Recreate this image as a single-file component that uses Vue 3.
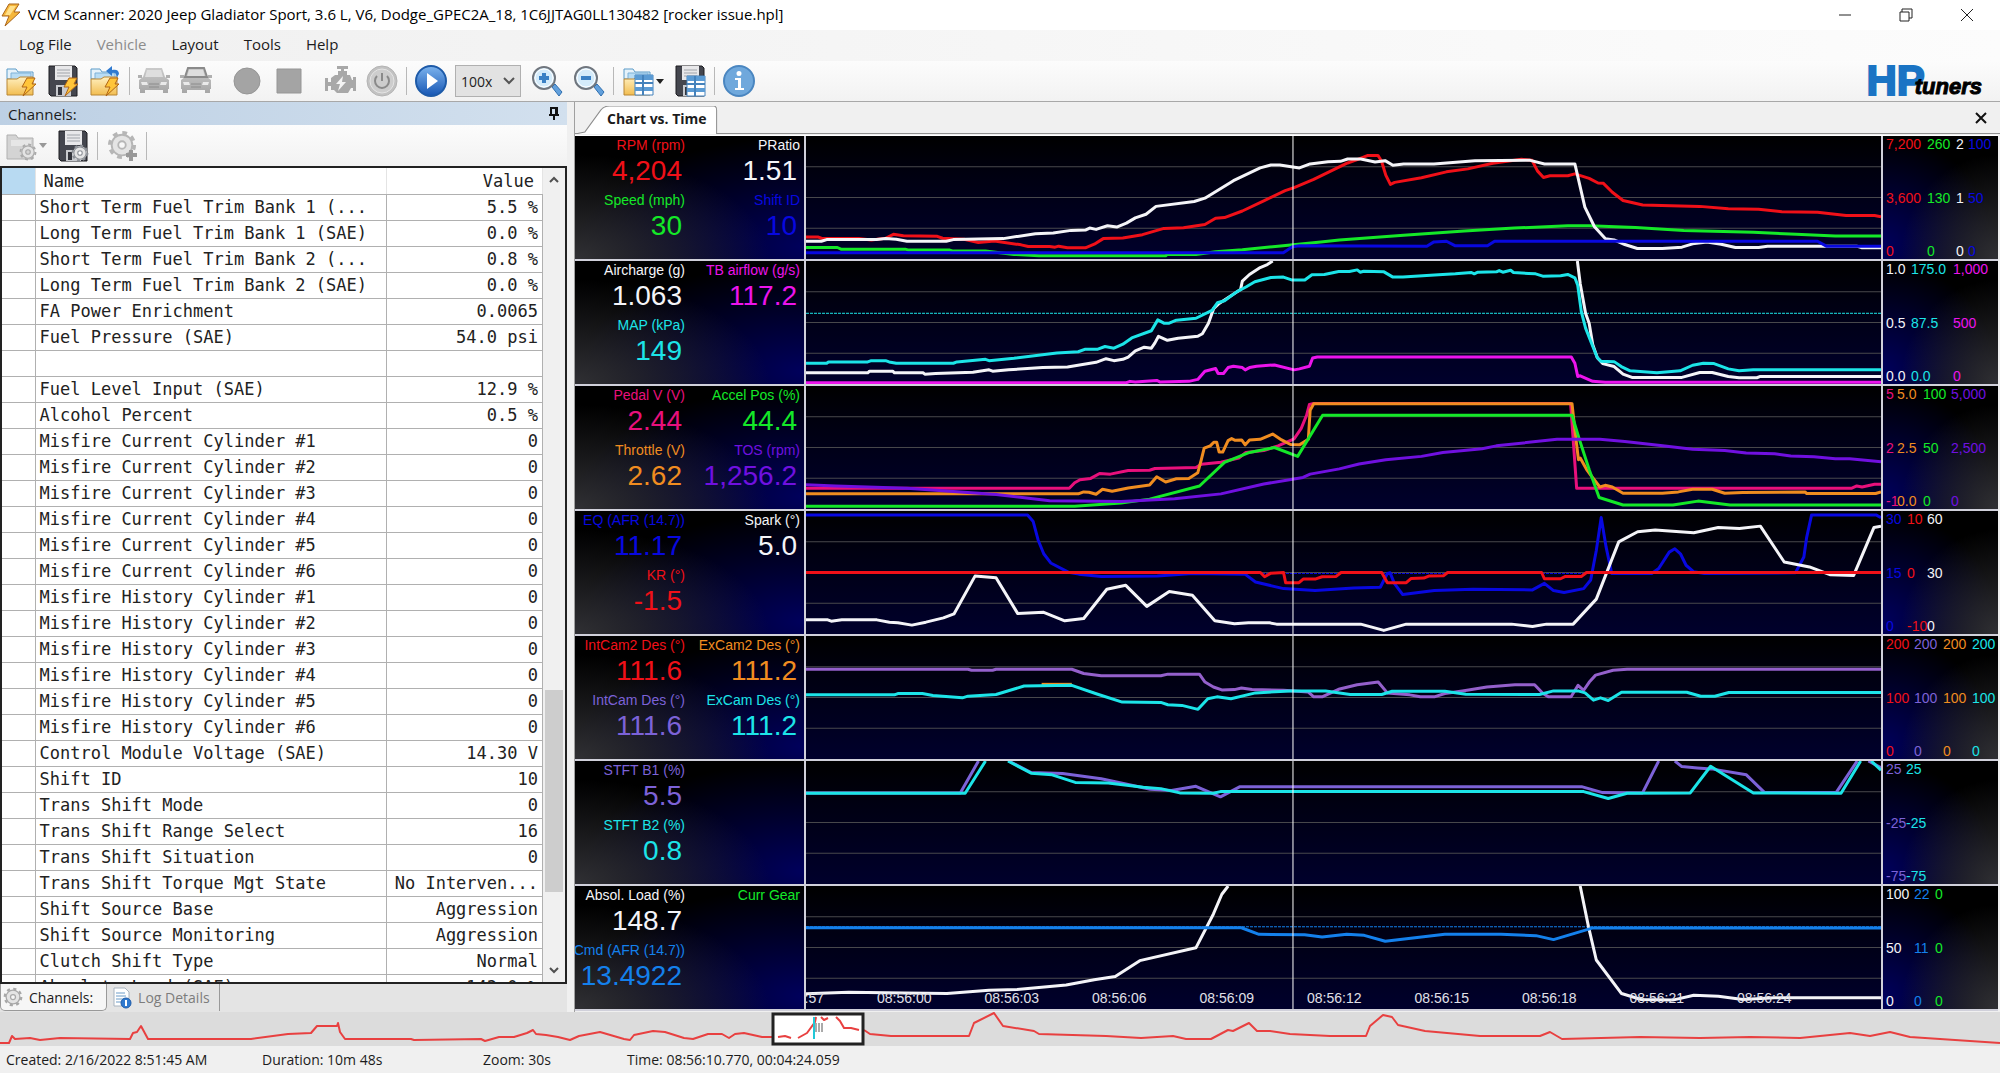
<script setup>
import { ref } from 'vue'

const speed = ref('100x')

const menus = [
  { label: 'Log File' },
  { label: 'Vehicle', disabled: true },
  { label: 'Layout' },
  { label: 'Tools' },
  { label: 'Help' },
]

const channels = [
  ['Short Term Fuel Trim Bank 1 (...', '5.5 %'],
  ['Long Term Fuel Trim Bank 1 (SAE)', '0.0 %'],
  ['Short Term Fuel Trim Bank 2 (...', '0.8 %'],
  ['Long Term Fuel Trim Bank 2 (SAE)', '0.0 %'],
  ['FA Power Enrichment', '0.0065'],
  ['Fuel Pressure (SAE)', '54.0 psi'],
  ['', ''],
  ['Fuel Level Input (SAE)', '12.9 %'],
  ['Alcohol Percent', '0.5 %'],
  ['Misfire Current Cylinder #1', '0'],
  ['Misfire Current Cylinder #2', '0'],
  ['Misfire Current Cylinder #3', '0'],
  ['Misfire Current Cylinder #4', '0'],
  ['Misfire Current Cylinder #5', '0'],
  ['Misfire Current Cylinder #6', '0'],
  ['Misfire History Cylinder #1', '0'],
  ['Misfire History Cylinder #2', '0'],
  ['Misfire History Cylinder #3', '0'],
  ['Misfire History Cylinder #4', '0'],
  ['Misfire History Cylinder #5', '0'],
  ['Misfire History Cylinder #6', '0'],
  ['Control Module Voltage (SAE)', '14.30 V'],
  ['Shift ID', '10'],
  ['Trans Shift Mode', '0'],
  ['Trans Shift Range Select', '16'],
  ['Trans Shift Situation', '0'],
  ['Trans Shift Torque Mgt State', 'No Interven...'],
  ['Shift Source Base', 'Aggression'],
  ['Shift Source Monitoring', 'Aggression'],
  ['Clutch Shift Type', 'Normal'],
  ['Absolute Load (SAE)', '143.0 %'],
]

const RED = '#f01018'
const GREEN = '#14e828'
const WHITE = '#f4f4f8'
const BLUE = '#0808e0'
const CYAN = '#1ce4e8'
const MAGENTA = '#ec14ec'
const PINK = '#e8107c'
const ORANGE = '#f08c20'
const VIOLET = '#7010e0'
const LAVENDER = '#7c62d8'
const ORCHID = '#9460cc'
const AZURE = '#1480ec'

// Each panel keeps its traces in its own sample window: [left, top, width, height].
const panels = [
  {
    box: [17, 16, 3013, 374],
    readouts: [
      { label: 'RPM (rpm)', value: '4,204', color: RED },
      { label: 'PRatio', value: '1.51', color: WHITE },
      { label: 'Speed (mph)', value: '30', color: GREEN },
      { label: 'Shift ID', value: '10', color: BLUE },
    ],
    columns: '41px 29px 12px auto',
    axes: [
      { color: RED, ticks: ['7,200', '3,600', '0'] },
      { color: GREEN, ticks: ['260', '130', '0'] },
      { color: WHITE, ticks: ['2', '1', '0'] },
      { color: BLUE, ticks: ['100', '50', '0'] },
    ],
    traces: [
      { color: RED, points: ['17,323 50,323 60,327 165,328 200,332 240,327 262,315 290,319 385,321 400,327 460,330 500,340 545,335 620,347 640,352 700,352 715,354 725,351 750,356 800,356 825,345 850,328 905,326 960,316 1020,297 1075,295 1135,285 1165,266 1190,264 1240,244 1300,213 1360,182 1385,173 1440,148 1535,98 1562,88 1592,75 1620,75 1630,92 1642,135 1655,163 1667,157 1742,143 1812,125 1872,116 1942,99 2022,87 2052,90 2067,122 2084,142 2102,137 2152,137 2172,131 2212,145 2237,159 2252,160 2277,187 2307,212 2362,226 2522,230 2602,237 2687,239 2752,246 2852,248 2932,258 3012,258 3030,262'] },
      { color: GREEN, points: ['17,355 105,355 115,360 295,360 305,363 420,363 430,366 520,366 600,376 670,380 1025,380 1030,376 1110,376 1165,368 1240,362 1340,351 1460,338 1512,332 1692,318 1862,305 2002,296 2152,289 2212,289 2342,294 2477,303 2672,309 2792,315 2902,320 3030,320'] },
      { color: WHITE, points: ['17,336 60,336 75,331 215,331 240,328 270,330 300,336 410,336 430,331 570,328 660,313 710,311 760,303 800,302 812,296 830,300 862,289 888,293 915,281 940,265 970,254 998,230 1105,215 1135,205 1215,152 1290,113 1320,104 1345,104 1400,113 1430,101 1480,94 1515,93 1535,86 1572,86 1612,95 1640,91 1662,105 1692,101 1777,101 1892,91 2047,90 2087,101 2172,101 2200,232 2227,292 2257,328 2282,332 2312,346 2347,358 2417,358 2472,354 2502,344 2542,338 2582,345 2622,355 2687,355 2712,351 2962,351 2977,356 3030,356'] },
      { color: BLUE, points: ['17,371 1355,371 1380,353 1400,350 1757,351 1777,338 1812,336 1837,350 1927,350 1947,336 2852,336 2877,351 3030,351'] },
    ],
    dotted: [],
  },
  {
    box: [17, 391, 3013, 374],
    readouts: [
      { label: 'Aircharge (g)', value: '1.063', color: WHITE },
      { label: 'TB airflow (g/s)', value: '117.2', color: MAGENTA },
      { label: 'MAP (kPa)', value: '149', color: CYAN },
    ],
    columns: '25px 42px auto',
    axes: [
      { color: WHITE, ticks: ['1.0', '0.5', '0.0'] },
      { color: CYAN, ticks: ['175.0', '87.5', '0.0'] },
      { color: MAGENTA, ticks: ['1,000', '500', '0'] },
    ],
    traces: [
      { color: WHITE, points: ['17,731 190,731 195,726 260,726 265,731 345,731 350,735 380,733 485,729 530,722 540,726 585,722 680,715 750,713 830,699 858,688 880,694 905,690 920,683 940,664 965,653 985,656 995,640 1005,620 1030,632 1060,626 1115,620 1128,612 1145,580 1160,535 1175,520 1235,478 1240,452 1260,432 1290,411 1310,402 1325,391', '2179,391 2187,460 2202,550 2212,580 2222,645 2235,685 2250,703 2282,712 2307,735 2332,745 2472,745 2522,730 2557,730 2602,742 2632,746 2682,746 2692,742 3030,742'] },
      { color: CYAN, points: ['17,702 75,702 80,698 190,698 200,694 240,694 250,698 270,702 430,702 440,698 520,690 530,694 600,687 720,671 780,667 800,659 835,659 855,651 880,656 905,644 930,625 985,603 1003,570 1020,580 1035,580 1055,571 1110,565 1155,541 1170,518 1190,512 1225,484 1250,470 1275,454 1320,441 1355,440 1380,449 1415,449 1435,433 1470,432 1510,423 1540,423 1562,418 1570,425 1580,422 1637,424 1662,440 1690,440 1790,433 1837,430 1882,426 1890,430 1900,425 1952,424 1960,420 1970,425 1992,419 2000,426 2042,429 2062,430 2082,437 2132,436 2152,432 2172,442 2180,465 2190,545 2202,595 2222,650 2235,685 2245,696 2282,697 2302,712 2327,725 2402,731 2467,725 2502,708 2532,702 2562,703 2602,719 2632,725 2672,722 3030,722'] },
      { color: MAGENTA, points: ['17,761 915,761 925,757 940,759 1000,754 1010,759 1090,757 1115,751 1135,726 1165,718 1172,733 1187,733 1200,715 1215,711 1240,715 1248,722 1260,715 1280,711 1330,707 1385,722 1400,719 1428,711 1437,686 1450,683 2162,683 2172,702 2180,742 2187,740 2222,757 2257,760 3030,760'] },
    ],
    dotted: [{ color: CYAN, y: 550 }],
  },
  {
    box: [17, 766, 3013, 374],
    readouts: [
      { label: 'Pedal V (V)', value: '2.44', color: PINK },
      { label: 'Accel Pos (%)', value: '44.4', color: GREEN },
      { label: 'Throttle (V)', value: '2.62', color: ORANGE },
      { label: 'TOS (rpm)', value: '1,256.2', color: VIOLET },
    ],
    columns: '11px 26px 28px auto',
    axes: [
      { color: PINK, ticks: ['5', '2', '-1'] },
      { color: ORANGE, ticks: ['5.0', '2.5', '0.0'] },
      { color: GREEN, ticks: ['100', '50', '0'] },
      { color: VIOLET, ticks: ['5,000', '2,500', '0'] },
    ],
    traces: [
      { color: PINK, points: ['17,1077 755,1077 770,1060 785,1051 815,1047 840,1032 870,1034 920,1023 980,1022 995,1017 1110,1014 1125,1004 1180,998 1230,985 1250,968 1300,962 1340,948 1385,927 1405,895 1420,855 1428,822 1440,819 2160,819 2177,1077 2947,1077 2962,1070 2977,1073 3012,1065 3030,1065'] },
      { color: ORANGE, points: ['17,1094 780,1094 795,1088 810,1089 830,1095 848,1080 875,1086 920,1076 980,1067 1000,1042 1025,1058 1055,1048 1090,1047 1115,1030 1125,990 1133,955 1150,948 1160,937 1168,937 1175,967 1185,967 1200,932 1210,926 1220,931 1238,930 1248,945 1260,930 1290,928 1325,912 1350,930 1375,944 1400,945 1425,928 1430,840 1440,820 2164,820 2172,900 2182,990 2187,985 2205,1020 2222,1045 2242,1073 2257,1068 2277,1073 2307,1092 2417,1092 2462,1088 2502,1080 2557,1080 2592,1092 2642,1090 2817,1088 2822,1093 3015,1093 3030,1088'] },
      { color: GREEN, points: ['17,1132 770,1132 900,1122 980,1110 1120,1070 1190,998 1260,968 1330,953 1395,980 1465,855 2164,855 2185,930 2212,1020 2240,1105 2307,1128 2447,1128 2517,1116 2607,1128 3030,1128'] },
      { color: VIOLET, points: ['17,1066 100,1070 300,1077 550,1096 700,1115 900,1117 1050,1109 1180,1094 1300,1064 1410,1044 1430,1034 1512,1018 1567,1003 1642,990 1742,980 1802,968 1912,957 1952,948 2122,928 2242,928 2312,935 2412,947 2502,958 2592,962 2652,970 2732,972 2777,979 2842,981 2902,987 2942,987 3030,996'] },
    ],
    dotted: [],
  },
  {
    box: [9, 30, 1533, 374],
    readouts: [
      { label: 'EQ (AFR (14.7))', value: '11.17', color: BLUE },
      { label: 'Spark (°)', value: '5.0', color: WHITE },
      { label: 'KR (°)', value: '-1.5', color: RED },
    ],
    columns: '21px 20px auto',
    axes: [
      { color: BLUE, ticks: ['30', '15', '0'] },
      { color: RED, ticks: ['10', '0', '-10'] },
      { color: WHITE, ticks: ['60', '30', '0'] },
    ],
    traces: [
      { color: BLUE, points: ['9,42 325,42 333,62 340,118 348,160 358,188 383,216 398,222 430,229 510,228 560,220 635,222 650,246 690,266 735,272 790,264 828,262 838,220 842,218 848,250 860,284 905,272 960,268 1045,270 1062,250 1075,272 1090,278 1118,266 1128,240 1136,150 1143,50 1150,140 1158,220 1215,220 1225,205 1240,155 1248,145 1256,160 1264,195 1275,215 1290,220 1420,218 1432,170 1436,110 1443,42 1535,42 1542,50'] },
      { color: WHITE, points: ['9,361 40,361 45,365 60,361 110,361 128,368 140,370 160,377 180,368 205,355 220,343 250,228 280,233 311,342 348,338 378,364 405,357 438,268 465,256 495,320 527,275 560,286 592,364 620,373 640,370 670,370 680,374 800,374 833,393 865,374 1015,374 1045,381 1065,374 1103,374 1136,298 1168,124 1195,93 1220,88 1275,96 1310,80 1340,83 1370,76 1404,185 1440,200 1470,224 1503,226 1532,80 1542,76'] },
      { color: RED, points: ['9,217 657,217 663,230 672,219 690,217 693,248 712,248 718,237 735,237 745,230 765,229 772,217 830,217 838,248 865,248 872,235 890,234 897,228 918,227 924,217 1058,217 1062,236 1085,236 1092,229 1115,229 1122,217 1542,217'] },
    ],
    dotted: [{ color: BLUE, y: 220 }],
  },
  {
    box: [9, 405, 1533, 374],
    readouts: [
      { label: 'IntCam2 Des (°)', value: '111.6', color: RED },
      { label: 'ExCam2 Des (°)', value: '111.2', color: ORANGE },
      { label: 'IntCam Des (°)', value: '111.6', color: LAVENDER },
      { label: 'ExCam Des (°)', value: '111.2', color: CYAN },
    ],
    columns: '28px 29px 29px auto',
    axes: [
      { color: RED, ticks: ['200', '100', '0'] },
      { color: LAVENDER, ticks: ['200', '100', '0'] },
      { color: ORANGE, ticks: ['200', '100', '0'] },
      { color: CYAN, ticks: ['200', '100', '0'] },
    ],
    traces: [
      { color: ORCHID, points: ['9,506 240,506 245,509 275,509 280,506 388,506 405,519 430,526 515,526 525,521 570,521 578,545 590,560 602,569 620,568 630,563 645,568 690,570 725,575 733,590 745,590 770,566 795,553 825,545 838,578 870,584 885,590 905,590 920,580 945,572 980,560 1020,553 1048,553 1060,580 1068,590 1100,590 1110,555 1118,570 1126,545 1135,524 1160,509 1180,506 1542,506'] },
      { color: ORANGE, points: ['345,552 388,552'] },
      { color: CYAN, points: ['9,584 135,584 140,580 175,580 190,586 232,593 240,588 280,583 320,557 388,555 425,582 460,606 515,607 525,614 545,616 568,628 582,596 595,590 615,596 650,578 700,572 750,572 785,583 830,583 845,573 920,573 950,582 1055,583 1075,572 1110,572 1120,578 1132,600 1142,593 1153,601 1172,576 1265,576 1285,588 1305,588 1325,577 1542,577'] },
    ],
    dotted: [],
  },
  {
    box: [9, 780, 1533, 374],
    readouts: [
      { label: 'STFT B1 (%)', value: '5.5', color: LAVENDER },
      null,
      { label: 'STFT B2 (%)', value: '0.8', color: CYAN },
    ],
    columns: '20px auto',
    axes: [
      { color: LAVENDER, ticks: ['25', '-25', '-75'] },
      { color: CYAN, ticks: ['25', '-25', '-75'] },
    ],
    traces: [
      { color: LAVENDER, points: ['9,877 229,877 255,780', '298,780 330,815 375,818 430,834 500,866 530,870 565,857 600,889 628,858 1115,858 1145,876 1202,877 1225,780', '1248,780 1258,797 1280,801 1300,804 1350,822 1376,876 1478,876 1508,780', '1524,780 1542,800'] },
      { color: CYAN, points: ['9,878 236,878 265,780', '297,780 330,817 360,822 393,845 440,847 490,860 515,864 542,877 590,878 600,873 1118,873 1153,894 1180,878 1270,877 1299,796 1360,877 1485,878 1513,780', '1528,780 1542,808'] },
    ],
    dotted: [],
  },
  {
    box: [9, 1155, 1533, 374],
    readouts: [
      { label: 'Absol. Load (%)', value: '148.7', color: WHITE },
      { label: 'Curr Gear', value: '', color: GREEN },
      { label: 'EQ Cmd (AFR (14.7))', value: '13.4922', color: AZURE },
    ],
    columns: '28px 21px auto',
    axes: [
      { color: WHITE, ticks: ['100', '50', '0'] },
      { color: AZURE, ticks: ['22', '11', '0'] },
      { color: GREEN, ticks: ['0', '0', '0'] },
    ],
    traces: [
      { color: WHITE, points: ['9,1483 70,1478 150,1480 210,1482 270,1472 310,1470 380,1456 420,1440 450,1430 485,1382 565,1343 590,1240 602,1180 611,1155', '1113,1155 1125,1280 1136,1380 1172,1482 1200,1500 1245,1502 1275,1487 1310,1490 1345,1500 1390,1495 1542,1495'] },
      { color: AZURE, points: ['9,1282 630,1282 655,1302 720,1303 745,1310 780,1302 805,1305 835,1323 920,1302 1000,1302 1050,1306 1075,1318 1130,1283 1542,1283'] },
    ],
    dotted: [{ color: AZURE, y: 1279 }],
  },
]

const times = ['08:55:57', '08:56:00', '08:56:03', '08:56:06', '08:56:09', '08:56:12', '08:56:15', '08:56:18', '08:56:21', '08:56:24']

const CURSOR = 0.453
const quarters = [0.25, 0.5, 0.75]

const overviewLeft = '0,31 9,31 12,24 15,27 30,26 40,28 60,26 130,27 133,21 137,20 141,14 148,27 251,27 288,22 311,21 317,14 337,14 338,11 340,20 345,27 411,27 414,28 481,27 485,29 499,25 514,25 527,21 533,18 536,22 546,23 558,25 566,27 570,28 579,24 600,20 624,27 630,28 634,23 653,19 665,20 684,26 693,27 708,22 722,22 729,26 735,22 744,21 762,25 772,25'
const overviewRight = '864,18 870,22 891,24 969,24 974,11 994,1 1003,14 1034,19 1039,22 1106,24 1141,26 1173,24 1186,27 1211,27 1228,18 1233,19 1249,11 1257,19 1270,19 1290,22 1330,24 1366,24 1370,14 1383,3 1392,5 1398,13 1425,19 1480,24 1540,24 1550,20 1562,27 1640,25 1700,26 1750,25 1800,26 1850,21 1870,24 1890,20 1910,25 2000,31'
</script>

<template>
  <div class="app">
    <header class="titlebar">
      <svg class="bolt" viewBox="0 0 22 24" aria-hidden="true"><path d="M9 1h10l-5 8h6L5 23l4-10H2z" fill="#f5b63a" stroke="#a9641c" stroke-width="1" /><path d="M10 3h6l-6 9H5z" fill="#ffe08a" /></svg>
      <h1>VCM Scanner: 2020 Jeep Gladiator Sport, 3.6 L, V6, Dodge_GPEC2A_18, 1C6JJTAG0LL130482 [rocker issue.hpl]</h1>
      <div class="winbuttons">
        <button aria-label="Minimize"><svg viewBox="0 0 14 14"><path d="M1 7h12" /></svg></button>
        <button aria-label="Restore"><svg viewBox="0 0 14 14"><path d="M1 4h9v9H1zM3 4V1h10v9h-3" /></svg></button>
        <button aria-label="Close"><svg viewBox="0 0 14 14"><path d="M1 1l12 12M13 1L1 13" /></svg></button>
      </div>
    </header>

    <nav class="menubar">
      <button v-for="m in menus" :key="m.label" :disabled="m.disabled">{{ m.label }}</button>
    </nav>

    <svg class="defs" aria-hidden="true">
      <defs>
        <linearGradient id="folderFill" x1="0" y1="0" x2="0" y2="1"><stop offset="0" stop-color="#fff0c0" /><stop offset="1" stop-color="#f2bd50" /></linearGradient>
        <linearGradient id="blueFill" x1="0" y1="0" x2="0" y2="1"><stop offset="0" stop-color="#7db4ee" /><stop offset="1" stop-color="#1656b4" /></linearGradient>
        <linearGradient id="greyFill" x1="0" y1="0" x2="0" y2="1"><stop offset="0" stop-color="#cacaca" /><stop offset="1" stop-color="#a6a6a6" /></linearGradient>
        <symbol id="folder" viewBox="0 0 32 32">
          <path d="M2 14V4h9l2 3h15v7z" fill="#e6f2fa" stroke="#5b9bc8" />
          <path d="M6 8h20v8H6z" fill="#b8dcf4" stroke="#7fb2d8" />
          <path d="M2 30V14h10l3-2h13v18z" fill="url(#folderFill)" stroke="#b88634" />
        </symbol>
        <symbol id="floppy" viewBox="0 0 32 32">
          <path d="M2 1h26l2 2v28H4l-2-2z" fill="#44464e" stroke="#1c1c20" />
          <path d="M8 1h17v14H8z" fill="#e8e8ea" /><path d="M10 5h13M10 8h13M10 11h13" stroke="#a0a4aa" />
          <path d="M9 20h15v11H9z" fill="#c8cace" /><path d="M11 22h4v8h-4z" fill="#33353c" />
        </symbol>
        <symbol id="flash" viewBox="0 0 16 20"><path d="M6 1h8l-3 6h4L2 19l4-9H1z" fill="#ffc53a" stroke="#b06414" /></symbol>
        <symbol id="car" viewBox="0 0 32 32">
          <path d="M8 3h16l3 9 4 3v9h-1v4h-5v-3H7v3H2v-4H1v-9l4-3z" fill="url(#greyFill)" />
          <path d="M9 5h14l2 7H7z" fill="#dedede" /><path d="M3 17h6l1 3H4zM29 17h-6l-1 3h6z" fill="#eaeaea" /><path d="M11 19h10M11 22h10" stroke="#8c8c8c" /><path d="M0 10h4v3H0zM28 10h4v3h-4z" fill="#b0b0b0" />
        </symbol>
        <symbol id="gear" viewBox="0 0 32 32">
          <circle cx="16" cy="16" r="13" fill="none" stroke="currentColor" stroke-width="4" stroke-dasharray="5 5.2" />
          <circle cx="16" cy="16" r="8" fill="none" stroke="#e4e4e4" stroke-width="7" />
          <circle cx="16" cy="16" r="11" fill="none" stroke="currentColor" stroke-width="2" />
          <circle cx="16" cy="16" r="4" fill="none" stroke="currentColor" stroke-width="2" />
        </symbol>
        <symbol id="grid" viewBox="0 0 20 22"><path d="M1 1h18v20H1z" fill="#fff" stroke="#4482bc" /><path d="M1 1h18v5H1zM1 13h18v4H1z" fill="#5b9bd4" /><path d="M9 1v20M1 9h18" stroke="#4482bc" stroke-width="2" /></symbol>
        <symbol id="lens" viewBox="0 0 32 32"><path d="M21 22l3-3 7 8-3 4z" fill="#62a0dc" stroke="#2f6faf" /><circle cx="13" cy="13" r="11" fill="#d4ebfa" stroke="#70767e" stroke-width="2" /><circle cx="13" cy="13" r="9" fill="none" stroke="#fff" /></symbol>
      </defs>
    </svg>

    <div class="toolbar">
      <button class="tool" aria-label="Open log"><svg viewBox="0 0 32 32"><use href="#folder" /><use href="#flash" x="16" y="12" width="16" height="20" /></svg></button>
      <button class="tool" aria-label="Save log"><svg viewBox="0 0 32 32"><use href="#floppy" /><use href="#flash" x="16" y="12" width="16" height="20" /></svg></button>
      <button class="tool" aria-label="Reload log"><svg viewBox="0 0 32 32"><use href="#folder" /><use href="#flash" x="15" y="12" width="16" height="20" /><path d="M30 9c0-4-3-5-7-4V1l-6 5 6 5V8c3-1 4 0 5 4z" fill="#2f7ad0" /></svg></button>
      <i class="sep"></i>
      <button class="tool" disabled aria-label="Connect"><svg viewBox="0 0 32 32"><use href="#car" /></svg></button>
      <button class="tool" disabled aria-label="Vehicle info"><svg viewBox="0 0 32 32"><use href="#car" /><path d="M8 3h16l3 9H5z" fill="none" stroke="#8a8a8a" stroke-width="2" /></svg></button>
      <button class="tool spaced" disabled aria-label="Record"><svg viewBox="0 0 32 32"><circle cx="16" cy="16" r="13" fill="#a4a4a4" stroke="#969696" /></svg></button>
      <button class="tool" disabled aria-label="Stop"><svg viewBox="0 0 32 32"><path d="M4 4h24v24H4z" fill="#a4a4a4" stroke="#969696" /></svg></button>
      <button class="tool spaced" disabled aria-label="Engine"><svg viewBox="0 0 32 32"><path d="M17 6V4h-4V1h11v3h-4v2h3v4h3l2 5h1v-3h3v14h-3v-3h-2l-3 5H13l-3-3H7v-4H4v5H1V13h3v4h3v-4l4-3h3V6z" fill="#a8a8a8" /><path d="M19 11l-7 8h4l-2 7 8-9h-4z" fill="#f4f4f4" /></svg></button>
      <button class="tool" disabled aria-label="Power"><svg viewBox="0 0 32 32"><circle cx="16" cy="16" r="15" fill="#c2c2c2" stroke="#b4b4b4" /><circle cx="16" cy="16" r="12" fill="#cdcdcd" stroke="#e4e4e4" /><path d="M16 8v8M11 11a7 7 0 1 0 10 0" fill="none" stroke="#8a8a8a" stroke-width="2" /></svg></button>
      <i class="sep"></i>
      <button class="tool" aria-label="Play"><svg viewBox="0 0 32 32"><circle cx="16" cy="16" r="15" fill="url(#blueFill)" stroke="#1d5aa8" stroke-width="2" /><path d="M12 8l11 8-11 8z" fill="#fff" /></svg></button>
      <div class="speed">
        <select v-model="speed" aria-label="Playback speed"><option>100x</option></select>
        <svg viewBox="0 0 12 8" aria-hidden="true"><path d="M1 1l5 5 5-5" /></svg>
      </div>
      <button class="tool" aria-label="Zoom in"><svg viewBox="0 0 32 32"><use href="#lens" /><path d="M13 8v10M8 13h10" stroke="#3a80c4" stroke-width="4" /></svg></button>
      <button class="tool" aria-label="Zoom out"><svg viewBox="0 0 32 32"><use href="#lens" /><path d="M8 13h10" stroke="#3a80c4" stroke-width="4" /></svg></button>
      <i class="sep"></i>
      <button class="tool drop" aria-label="Open layout"><svg viewBox="0 0 32 32"><use href="#folder" /><use href="#grid" x="12" y="9" width="20" height="22" /></svg><svg class="caret" viewBox="0 0 8 5"><path d="M0 0h8L4 5z" /></svg></button>
      <button class="tool" aria-label="Save layout"><svg viewBox="0 0 32 32"><use href="#floppy" /><use href="#grid" x="12" y="10" width="20" height="22" /></svg></button>
      <i class="sep"></i>
      <button class="tool" aria-label="Information"><svg viewBox="0 0 32 32"><circle cx="16" cy="16" r="15" fill="#6fa8dc" stroke="#4a86c0" stroke-width="2" /><path d="M16 6a2 2 0 1 1 0 5 2 2 0 0 1 0-5zM12 13h6v10h3v2h-9v-2h3v-8h-3z" fill="#fff" /></svg></button>
      <div class="logo"><b>HP</b><em>tuners</em></div>
    </div>

    <main class="workspace">
      <section class="side">
        <div class="side-title">
          <h2>Channels:</h2>
          <button aria-label="Pin panel"><svg viewBox="0 0 12 14"><path d="M3 1h6v7H3zM8 1v7M1 8h10M6 8v5" /></svg></button>
        </div>
        <div class="side-tools">
          <button class="tool drop" disabled aria-label="Open channels"><svg viewBox="0 0 32 32"><path d="M2 29V5h9l2 3h15v21z" fill="#d4d4d4" stroke="#b0b0b0" /><path d="M6 10h20v6H6z" fill="#e6e6e6" /><use href="#gear" x="14" y="13" width="18" height="18" color="#aaa" /></svg><svg class="caret" viewBox="0 0 8 5"><path d="M0 0h8L4 5z" /></svg></button>
          <button class="tool" aria-label="Save channels"><svg viewBox="0 0 32 32"><use href="#floppy" /><circle cx="23" cy="23" r="7" fill="#fff" /><use href="#gear" x="14" y="14" width="18" height="18" color="#8c9096" /></svg></button>
          <i class="sep"></i>
          <button class="tool" disabled aria-label="Add channel"><svg viewBox="0 0 32 32"><use href="#gear" width="32" height="30" color="#b6b6b6" /><path d="M25 20v11M20 25h11" stroke="#989898" stroke-width="4" /></svg></button>
          <i class="sep"></i>
        </div>
        <div class="grid-wrap">
          <div class="grid-view">
            <table>
              <colgroup><col class="c-mark" /><col class="c-name" /><col class="c-value" /></colgroup>
              <thead><tr><th class="mark"></th><th>Name</th><th class="num">Value</th></tr></thead>
              <tbody>
                <tr v-for="(c, i) in channels" :key="i"><td></td><td>{{ c[0] }}</td><td class="num">{{ c[1] }}</td></tr>
              </tbody>
            </table>
          </div>
          <div class="scroll">
            <svg viewBox="0 0 12 8"><path d="M2 6l4-4 4 4" /></svg>
            <div class="track"><div class="thumb"></div></div>
            <svg viewBox="0 0 12 8"><path d="M2 2l4 4 4-4" /></svg>
          </div>
        </div>
        <div class="side-tabs">
          <button class="on"><svg viewBox="0 0 32 32"><use href="#gear" color="#a8a8a8" /></svg>Channels:</button>
          <button><svg viewBox="0 0 20 22"><path d="M2 1h11l4 4v14H2z" fill="#fff" stroke="#a8b4c0" /><path d="M4 6h9M4 9h10M4 12h8M4 15h6" stroke="#6c9cc8" /><circle cx="14" cy="16" r="5" fill="#2f7ad0" stroke="#1d5aa8" /><path d="M14 13v6" stroke="#fff" stroke-width="2" /></svg>Log Details</button>
        </div>
      </section>

      <section class="charts">
        <div class="chart-tabs">
          <div class="chart-tab">
            <svg viewBox="0 0 144 27" preserveAspectRatio="none" aria-hidden="true"><path d="M0 27L10 25L26 4Q29 0 35 0H140Q143 0 143 4V27" /></svg>
            <button>Chart vs. Time</button>
          </div>
          <button class="x" aria-label="Close chart"><svg viewBox="0 0 12 12"><path d="M1 1l10 10M11 1L1 11" /></svg></button>
        </div>
        <div class="panels">
          <article v-for="(p, i) in panels" :key="i" class="panel">
            <div class="readouts">
              <div v-for="(r, j) in p.readouts" :key="j" class="readout">
                <template v-if="r">
                  <span class="label" :style="{ color: r.color }">{{ r.label }}</span>
                  <span class="value" :style="{ color: r.color }">{{ r.value }}</span>
                </template>
              </div>
            </div>
            <div class="plot">
              <svg :viewBox="p.box.join(' ')" preserveAspectRatio="none">
                <line v-for="q in quarters" :key="q" class="gridline" :x1="p.box[0]" :x2="p.box[0] + p.box[2]" :y1="p.box[1] + p.box[3] * q" :y2="p.box[1] + p.box[3] * q" />
                <line v-for="(d, k) in p.dotted" :key="'d' + k" class="dotted" :stroke="d.color" :x1="p.box[0]" :x2="p.box[0] + p.box[2]" :y1="d.y" :y2="d.y" />
                <template v-for="(t, k) in p.traces" :key="'t' + k">
                  <polyline v-for="(s, n) in t.points" :key="n" class="trace" :stroke="t.color" :points="s" />
                </template>
                <line class="cursor" :x1="p.box[0] + p.box[2] * CURSOR" :x2="p.box[0] + p.box[2] * CURSOR" :y1="p.box[1]" :y2="p.box[1] + p.box[3]" />
              </svg>
              <div v-if="i === panels.length - 1" class="times"><span v-for="t in times" :key="t">{{ t }}</span></div>
            </div>
            <div class="axes" :style="{ gridTemplateColumns: p.columns }">
              <div v-for="(a, k) in p.axes" :key="k" class="axis" :style="{ color: a.color }">
                <span v-for="(t, n) in a.ticks" :key="n">{{ t }}</span>
              </div>
            </div>
          </article>
        </div>
      </section>
    </main>

    <div class="overview">
      <svg viewBox="0 0 2000 34" preserveAspectRatio="none">
        <polyline :points="overviewLeft" />
        <polyline :points="overviewRight" />
        <rect x="773" y="2" width="90" height="30" />
        <polyline points="778,25 785,24 791,26" />
        <polyline points="798,26 807,21 815,10 816,5" />
        <polyline points="821,5 824,8 828,6" />
        <polyline points="836,5 840,9 844,16 851,16 859,18" />
        <path class="grip" d="M816 11v9M819 11v9M822 11v9" />
        <path class="now" d="M814 5v22" />
      </svg>
    </div>

    <footer class="status">
      <span class="s1">Created: 2/16/2022 8:51:45 AM</span>
      <span class="s2">Duration: 10m 48s</span>
      <span class="s3">Zoom: 30s</span>
      <span>Time: 08:56:10.770, 00:04:24.059</span>
    </footer>
  </div>
</template>

<style>
body { background: #f0f0f0; }
</style>

<style scoped>
.app {
  display: flex;
  flex-direction: column;
  height: 100vh;
  overflow: hidden;
  font-family: "Open Sans", "Noto Sans", sans-serif;
  font-size: 15px;
  color: #1c1c1c;
  background: #f0f0f0;
}
button {
  font: inherit;
  color: inherit;
  background: none;
  border: 0;
  padding: 0;
}
h1, h2 { margin: 0; font-weight: 400; }
svg { display: block; }
.defs { width: 0; height: 0; position: absolute; }

.titlebar {
  display: flex;
  align-items: center;
  height: 30px;
  background: #fff;
  flex: none;
}
.bolt { width: 22px; height: 24px; margin-right: 6px; }
.titlebar h1 { flex: 1; font-size: 15px; line-height: 28px; white-space: nowrap; color: #000; padding-bottom: 2px; }
.winbuttons { display: flex; padding-right: 3px; }
.winbuttons button { width: 61px; height: 30px; display: flex; align-items: center; justify-content: center; }
.winbuttons svg { width: 14px; height: 14px; fill: none; stroke: #222; }

.menubar {
  display: flex;
  height: 31px;
  padding-left: 19px;
  gap: 25px;
  background: linear-gradient(90deg, #f0f0f0, #fcfcfc);
  flex: none;
}
.menubar button { line-height: 29px; padding-bottom: 2px; }
.menubar button:disabled { color: #8c8c8c; }

.toolbar {
  display: flex;
  align-items: center;
  height: 40px;
  border-bottom: 1px solid #a8a8a8;
  background: linear-gradient(#fcfcfc, #f2f2f2);
  flex: none;
}
.tool { width: 42px; height: 32px; display: flex; align-items: center; justify-content: center; flex: none; }
.tool svg { width: 32px; height: 32px; }
.tool.spaced { margin-left: 9px; }
.tool.drop { width: 52px; gap: 2px; }
.tool.drop .caret { width: 8px; height: 5px; fill: #222; }
.tool.drop:disabled .caret { fill: #999; }
.sep { width: 1px; height: 28px; margin: 0 3px; background: #b8b8b8; flex: none; }
.speed { position: relative; width: 66px; height: 32px; margin: 0 5px 0 3px; flex: none; }
.speed select {
  appearance: none;
  width: 100%;
  height: 100%;
  border: 1px solid #b0b0b0;
  border-radius: 0;
  background: #e2e2e2;
  color: #222;
  font: 14px "Open Sans", sans-serif;
  padding: 0 5px;
}
.speed svg { position: absolute; right: 6px; top: 12px; width: 12px; height: 8px; fill: none; stroke: #555; stroke-width: 2; }
.logo { display: flex; align-items: flex-end; margin-left: auto; padding-right: 18px; font-family: "Liberation Sans", Arial, sans-serif; height: 38px; }
.logo b { font-size: 42px; line-height: 38px; font-weight: 700; color: #1a74c4; -webkit-text-stroke: 2px #1a74c4; }
.logo em { font-size: 22px; line-height: 26px; font-weight: 700; color: #000; margin-left: -10px; -webkit-text-stroke: 1px #000; }

.workspace { display: flex; gap: 7px; flex: 1; min-height: 0; }
.side { width: 567px; display: flex; flex-direction: column; flex: none; min-height: 0; }
.side-title { display: flex; align-items: center; justify-content: space-between; height: 23px; padding: 0 7px 0 8px; background: linear-gradient(90deg, #bdd0e4, #d2e0ee); flex: none; }
.side-title h2 { font-size: 15px; line-height: 24px; }
.side-title svg { width: 12px; height: 14px; fill: none; stroke: #111; stroke-width: 2; }
.side-tools { display: flex; align-items: center; height: 41px; background: linear-gradient(#fcfcfc, #f2f2f2); flex: none; }

.grid-wrap { display: flex; flex: 1; min-height: 0; border: 2px solid #222; background: #fff; }
.grid-view { flex: 1; overflow: hidden; }
table { width: 100%; table-layout: fixed; border-collapse: collapse; font-family: "DejaVu Sans Mono", monospace; font-size: 17px; color: #222; }
.c-mark { width: 33px; }
.c-value { width: 156px; }
th { font-weight: 400; text-align: left; }
th, td { height: 25px; line-height: 25px; padding: 0 4px; white-space: pre; overflow: hidden; border-right: 1px solid #b0b0b0; border-bottom: 1px solid #b0b0b0; }
th { padding: 0 8px; height: 26px; border-right-color: #e4e4e4; }
th.mark { background: #b8daf2; }
.num { text-align: right; }
.scroll { width: 22px; display: flex; flex-direction: column; align-items: center; background: #f0f0f0; padding: 8px 0; }
.scroll svg { width: 12px; height: 8px; fill: none; stroke: #505050; stroke-width: 2; }
.track { flex: 1; width: 18px; display: flex; flex-direction: column; padding: 506px 0 74px; }
.thumb { flex: 1; background: #cdcdcd; }

.side-tabs { display: flex; height: 28px; background: #e4e4e4; font-size: 14px; flex: none; }
.side-tabs button { display: flex; align-items: center; gap: 6px; height: 27px; padding: 0 9px 0 5px; color: #7c7c7c; border-right: 1px solid #999; }
.side-tabs button svg { width: 20px; height: 22px; }
.side-tabs .on { color: #1c1c1c; background: #f6f6f6; border: 1px solid #999; border-top: 0; border-radius: 0 0 5px 5px; padding: 0 13px 0 2px; }

.charts { flex: 1; min-width: 0; display: flex; flex-direction: column; border-left: 1px solid #a0a0a0; }
.chart-tabs { display: flex; align-items: flex-end; justify-content: space-between; height: 31px; border-bottom: 1px solid #909090; flex: none; }
.chart-tab { position: relative; height: 27px; }
.chart-tab svg { position: absolute; left: 0; top: 0; width: 100%; height: 28px; fill: #fff; stroke: #8c8c8c; }
.chart-tab button { position: relative; font-weight: 700; font-size: 14px; line-height: 25px; padding: 0 11px 0 32px; }
.x { padding: 0 13px 9px; }
.x svg { width: 12px; height: 12px; stroke: #111; stroke-width: 2; }

.panels { flex: 1; min-height: 0; display: flex; flex-direction: column; margin: 1px 2px 1px 0; border-top: 1px solid #fff; }
.panel { flex: 1 1 0; min-height: 0; display: grid; grid-template-columns: 231px 1fr 117px; border-bottom: 2px solid #d0d0da; font-family: "Liberation Sans", Arial, sans-serif; }
.readouts {
  display: grid;
  grid-template-columns: 110px 115px;
  grid-auto-rows: 55px;
  overflow: hidden;
  border-right: 2px solid #d0d0da;
  background: radial-gradient(ellipse at 0% 100%, #303034, transparent 60%), radial-gradient(ellipse at 100% 90%, #00005c, transparent 70%), #000;
}
.readout { display: flex; flex-direction: column; align-items: flex-end; min-width: 0; white-space: nowrap; }
.label { font-size: 14px; line-height: 18px; }
.value { font-size: 28px; line-height: 34px; padding-right: 3px; }
.plot { position: relative; overflow: hidden; min-height: 0; background: linear-gradient(#000, #000012 35%, #00002c); }
.plot svg { position: absolute; width: 100%; height: 100%; fill: none; }
.plot line, .plot polyline { vector-effect: non-scaling-stroke; }
.gridline { stroke: #48484c; stroke-width: 1; }
.dotted { stroke-width: 1; stroke-dasharray: 3 1; }
.trace { stroke-width: 3; stroke-linejoin: round; }
.cursor { stroke: #fff; stroke-width: 1; }
.times { position: absolute; left: -63px; bottom: 1px; display: flex; width: 100%; }
.times span { flex: 0 0 10%; text-align: center; color: #e0e0e8; font-size: 14px; line-height: 20px; }
.axes {
  display: grid;
  padding-left: 3px;
  border-left: 2px solid #d0d0da;
  overflow: hidden;
  background: radial-gradient(ellipse at 100% 100%, #303034, transparent 60%), radial-gradient(ellipse at 0% 90%, #00005c, transparent 70%), #000;
}
.axis { display: flex; flex-direction: column; justify-content: space-between; font-size: 14px; line-height: 16px; white-space: nowrap; min-width: 0; }

.overview { height: 34px; background: #dcdcdc; flex: none; }
.overview svg { width: 100%; height: 100%; fill: none; }
.overview polyline { stroke: #e84040; stroke-width: 2; stroke-linejoin: round; }
.overview rect { fill: #fff; stroke: #222; stroke-width: 3; }
.grip { stroke: #555; }
.now { stroke: #20c8d8; stroke-width: 2; }

.status { display: flex; height: 27px; line-height: 27px; padding-left: 6px; font-size: 14px; white-space: nowrap; flex: none; }
.s1 { width: 256px; }
.s2 { width: 221px; }
.s3 { width: 144px; }
</style>
